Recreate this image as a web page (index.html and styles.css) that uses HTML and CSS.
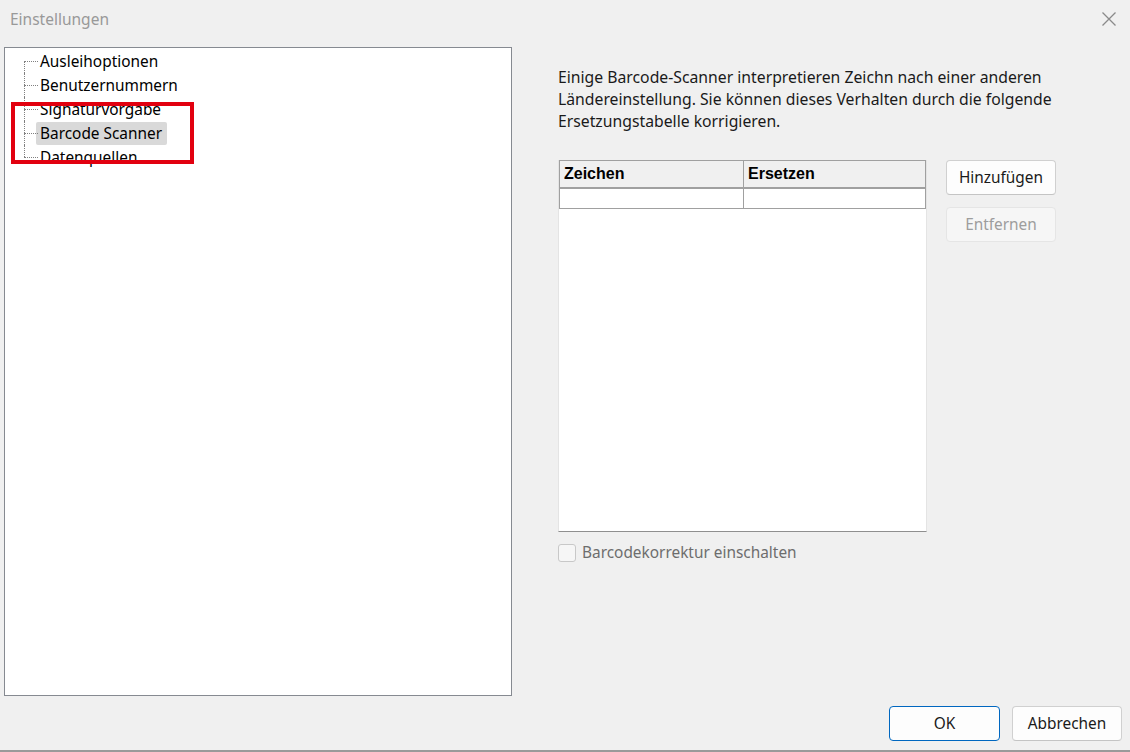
FILE: index.html
```html
<!DOCTYPE html>
<html lang="de">
<head>
<meta charset="utf-8">
<title>Einstellungen</title>
<link rel="stylesheet" href="styles.css">
</head>
<body>
<div class="window">
  <div class="titlebar">
    <span class="title">Einstellungen</span>
    <span class="close">
      <svg width="16" height="16" viewBox="0 0 16 16"><path d="M1.5 1.5 L14.5 14.5 M14.5 1.5 L1.5 14.5" stroke="#8a8a8a" stroke-width="1.3" fill="none"/></svg>
    </span>
  </div>
  <div class="content">
    <div class="tree">
      <ul class="tree-list">
        <li class="tree-item"><span class="tree-label">Ausleihoptionen</span></li>
        <li class="tree-item"><span class="tree-label">Benutzernummern</span></li>
        <li class="tree-item"><span class="tree-label">Signaturvorgabe</span></li>
        <li class="tree-item selected"><span class="tree-label">Barcode Scanner</span></li>
        <li class="tree-item last"><span class="tree-label">Datenquellen</span></li>
      </ul>
      <div class="highlight"></div>
    </div>
    <div class="panel">
      <p class="desc">Einige Barcode-Scanner interpretieren Zeichn nach einer anderen Ländereinstellung. Sie können dieses Verhalten durch die folgende Ersetzungstabelle korrigieren.</p>
      <div class="table-row">
        <div class="table">
          <div class="thead">
            <div class="th col1">Zeichen</div>
            <div class="th col2">Ersetzen</div>
          </div>
          <div class="tr">
            <div class="td col1"></div>
            <div class="td col2"></div>
          </div>
        </div>
        <div class="side-buttons">
          <button class="btn">Hinzufügen</button>
          <button class="btn disabled">Entfernen</button>
        </div>
      </div>
      <label class="check">
        <span class="box"></span>
        <span class="check-label">Barcodekorrektur einschalten</span>
      </label>
    </div>
  </div>
  <div class="footer">
    <button class="btn primary">OK</button>
    <button class="btn">Abbrechen</button>
  </div>
</div>
</body>
</html>
```

FILE: styles.css
```css
html, body {
  margin: 0;
  padding: 0;
  background: #f0f0f0;
}
body {
  font-family: "Noto Sans", "Open Sans", "DejaVu Sans", sans-serif;
  font-size: 15.4px;
  color: #000;
}
.window {
  width: 1130px;
  height: 752px;
  box-sizing: border-box;
  border-bottom: 2px solid #9a9a9a;
  display: flex;
  flex-direction: column;
  background: #f0f0f0;
}
.titlebar {
  height: 40px;
  display: flex;
  align-items: center;
  justify-content: space-between;
  padding: 0 13px 0 10px;
  box-sizing: border-box;
}
.title {
  color: #999999;
  font-size: 15.5px;
  margin-top: -2px;
}
.close {
  display: flex;
  margin-top: -2px;
}
.content {
  display: flex;
  padding: 7px 0 0 4px;
  height: 650px;
  box-sizing: border-box;
}
.tree {
  position: relative;
  width: 508px;
  height: 649px;
  box-sizing: border-box;
  background: #fff;
  border: 1px solid #868a91;
}
.tree-list {
  list-style: none;
  margin: 0;
  padding: 1px 0 0 0;
}
.tree-item {
  position: relative;
  height: 24px;
  display: flex;
  align-items: center;
  padding-left: 31px;
}
.tree-item::before {
  content: "";
  position: absolute;
  left: 19px;
  top: 12px;
  width: 14px;
  border-top: 1px dotted #808080;
}
.tree-item::after {
  content: "";
  position: absolute;
  left: 19px;
  top: 0;
  height: 24px;
  border-left: 1px dotted #808080;
}
.tree-item:first-child::after {
  top: 12px;
  height: 12px;
}
.tree-item.last::after {
  height: 12px;
}
.tree-label {
  padding: 0 5px 0 4px;
  line-height: 23px;
  white-space: nowrap;
}
.selected .tree-label {
  background: #d9d9d9;
  border-radius: 2px;
}
.highlight {
  position: absolute;
  left: 6px;
  top: 54px;
  width: 183px;
  height: 62px;
  box-sizing: border-box;
  border: 4px solid #e2000f;
  pointer-events: none;
}
.panel {
  flex: 1;
  display: flex;
  flex-direction: column;
  padding: 19px 0 0 46px;
}
.desc {
  margin: 0;
  width: 520px;
  font-size: 15.75px;
  line-height: 22px;
  color: #1a1a1a;
}
.table-row {
  display: flex;
  gap: 19px;
  margin-top: 28px;
}
.table {
  width: 369px;
  height: 372px;
  box-sizing: border-box;
  background: #fff;
  border-left: 1px solid #e4e4e4;
  border-right: 1px solid #e4e4e4;
  border-bottom: 1px solid #8f8f8f;
  display: flex;
  flex-direction: column;
}
.thead, .tr {
  display: flex;
}
.th {
  height: 29px;
  box-sizing: border-box;
  background: #f0f0f0;
  font-weight: 700;
  display: flex;
  align-items: center;
  padding-left: 4px;
  border-top: 1px solid #a0a0a0;
  border-bottom: 2px solid #a0a0a0;
  border-left: 1px solid #a0a0a0;
  font-family: "Liberation Sans", "DejaVu Sans", sans-serif;
  font-size: 16px;
}
.td {
  height: 20px;
  box-sizing: border-box;
  border-bottom: 1px solid #a0a0a0;
  border-left: 1px solid #a0a0a0;
}
.col1 { width: 184px; }
.col2 { width: 183px; border-right: 1px solid #a0a0a0; }
.side-buttons {
  display: flex;
  flex-direction: column;
  gap: 12px;
}
.btn {
  font-family: inherit;
  font-size: 15.4px;
  width: 110px;
  height: 35px;
  background: #fdfdfd;
  border: 1px solid #d0d0d0;
  border-bottom-color: #c4c4c4;
  border-radius: 4px;
  color: #1a1a1a;
  padding: 0;
}
.btn.disabled {
  background: #f6f6f6;
  border-color: #e5e5e5;
  color: #9d9d9d;
}
.btn.primary {
  border: 1px solid #0067c0;
  width: 111px;
}
.check {
  display: flex;
  align-items: center;
  gap: 6px;
  margin-top: 10px;
}
.box {
  width: 18px;
  height: 18px;
  box-sizing: border-box;
  border: 1px solid #c8c8c8;
  border-radius: 3px;
  background: #f6f6f6;
}
.check-label {
  color: #6d6d6d;
}
.footer {
  flex: 1;
  display: flex;
  justify-content: flex-end;
  align-items: flex-start;
  gap: 12px;
  padding: 16px 8px 0 0;
}
```
